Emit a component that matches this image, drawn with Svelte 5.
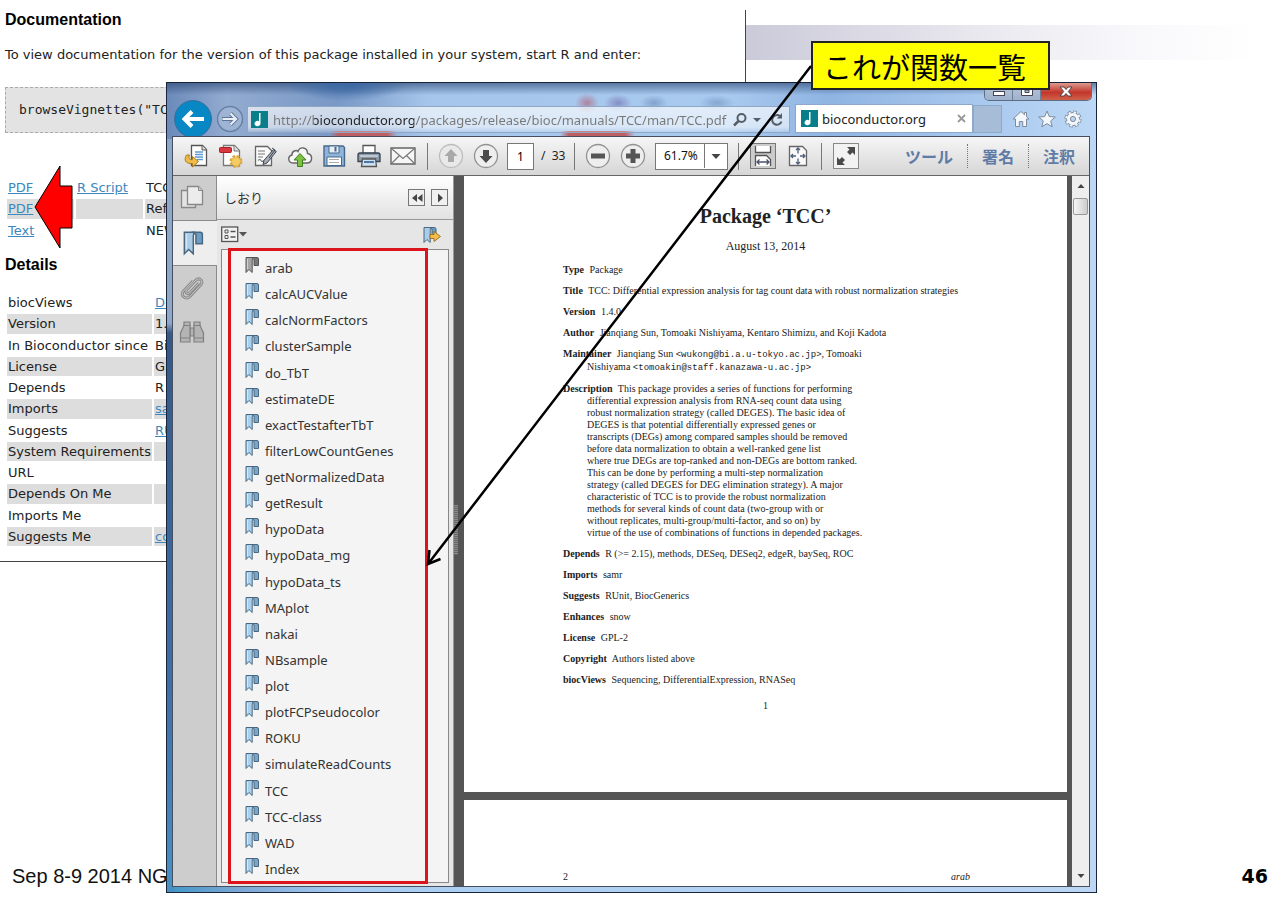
<script>
  const files = [
    { kind: 'PDF', script: 'R Script', text: 'TCC' },
    { kind: 'PDF', script: '', text: 'Refe' },
    { kind: 'Text', script: '', text: 'NEW' }
  ];
  const details = [
    ['biocViews', 'Di', true],
    ['Version', '1.4', false],
    ['In Bioconductor since', 'Bio', false],
    ['License', 'GP', false],
    ['Depends', 'R (', false],
    ['Imports', 'sa', true],
    ['Suggests', 'RU', true],
    ['System Requirements', '', false],
    ['URL', '', false],
    ['Depends On Me', '', false],
    ['Imports Me', '', false],
    ['Suggests Me', 'co', true]
  ];
  const bookmarks = [
    'arab', 'calcAUCValue', 'calcNormFactors', 'clusterSample', 'do_TbT', 'estimateDE',
    'exactTestafterTbT', 'filterLowCountGenes', 'getNormalizedData', 'getResult', 'hypoData',
    'hypoData_mg', 'hypoData_ts', 'MAplot', 'nakai', 'NBsample', 'plot', 'plotFCPseudocolor',
    'ROKU', 'simulateReadCounts', 'TCC', 'TCC-class', 'WAD', 'Index'
  ];
  const description = [
    'differential expression analysis from RNA-seq count data using',
    'robust normalization strategy (called DEGES). The basic idea of',
    'DEGES is that potential differentially expressed genes or',
    'transcripts (DEGs) among compared samples should be removed',
    'before data normalization to obtain a well-ranked gene list',
    'where true DEGs are top-ranked and non-DEGs are bottom ranked.',
    'This can be done by performing a multi-step normalization',
    'strategy (called DEGES for DEG elimination strategy). A major',
    'characteristic of TCC is to provide the robust normalization',
    'methods for several kinds of count data (two-group with or',
    'without replicates, multi-group/multi-factor, and so on) by',
    'virtue of the use of combinations of functions in depended packages.'
  ];
  const fieldsAfter = [
    ['Depends', 'R (>= 2.15), methods, DESeq, DESeq2, edgeR, baySeq, ROC'],
    ['Imports', 'samr'],
    ['Suggests', 'RUnit, BiocGenerics'],
    ['Enhances', 'snow'],
    ['License', 'GPL-2'],
    ['Copyright', 'Authors listed above'],
    ['biocViews', 'Sequencing, DifferentialExpression, RNASeq']
  ];
  let address = $state('http://bioconductor.org/packages/release/bioc/manuals/TCC/man/TCC.pdf');
  let pageNumber = $state('1');
  let zoom = $state('61.7%');
</script>

{#snippet ribbon(size, fill, back, line)}
  <svg width={size} height={size} viewBox="0 0 16 18" aria-hidden="true">
    <path d="M7 1.5h6q1.5 0 1.5 1.5v6.5h-4.5V3z" fill={back} stroke={line} />
    <path d="M2 1.5h7.5q-1.3.6-1.3 2.5v12.500L5 13.500l-3 3z" fill={fill} stroke={line} />
    <path d="M3.500 3v10" stroke="#fff" opacity=".5" />
  </svg>
{/snippet}

{#snippet note()}
  <svg width="17" height="17" viewBox="0 0 17 17" aria-hidden="true">
    <rect width="17" height="17" fill="#087e8b" />
    <path d="M8 2h1.500v10.500a3 2.700 0 1 1-1.500-2.300z" fill="#fff" />
  </svg>
{/snippet}

<main class="slide">
  <div class="band"></div>

  <section class="webpage">
    <h3>Documentation</h3>
    <p>To view documentation for the version of this package installed in your system, start R and enter:</p>
    <pre>browseVignettes("TCC")</pre>
    <table class="files">
      <tbody>
        {#each files as f}
          <tr>
            <td><a href="#file">{f.kind}</a></td>
            <td>{#if f.script}<a href="#script">{f.script}</a>{/if}</td>
            <td>{f.text}</td>
          </tr>
        {/each}
      </tbody>
    </table>
    <h3>Details</h3>
    <table class="details">
      <tbody>
        {#each details as [label, value, linked]}
          <tr>
            <th scope="row">{label}</th>
            <td>{#if linked}<a href="#detail">{value}</a>{:else}{value}{/if}</td>
          </tr>
        {/each}
      </tbody>
    </table>
  </section>

  <svg class="pointer" width="40" height="88" viewBox="0 0 40 88" aria-hidden="true">
    <path d="M1 43L26 2v20h12v42H26v20z" fill="#f00" stroke="#000" />
  </svg>

  <footer>
    <span class="date">Sep 8-9 2014 NGS</span>
    <span class="number">46</span>
  </footer>

  <section class="window">
    <div class="caption">
      <button aria-label="Minimize"><svg width="14" height="12" viewBox="0 0 14 12"><rect x="1.500" y="5.500" width="11" height="4" fill="#fff" stroke="#445" /></svg></button>
      <button aria-label="Maximize"><svg width="14" height="12" viewBox="0 0 14 12"><path d="M1.500.5h11v9h-11zM5 4h4v2.500H5z" fill="#fff" fill-rule="evenodd" stroke="#445" /></svg></button>
      <button class="close" aria-label="Close"><svg width="14" height="12" viewBox="0 0 14 12"><path d="M1 1h4l2 2.500L9 1h4L9.300 5.500 13 10H9L7 7.500 5 10H1l3.700-4.500z" fill="#fff" stroke="#544" /></svg></button>
    </div>

    <nav class="navrow">
      <button class="back" aria-label="Back">
        <svg width="38" height="38" viewBox="0 0 38 38"><circle cx="19" cy="19" r="18.500" fill="#0787c3" stroke="#3b6f9f" /><path d="M30 19H11M18 11.500L10.500 19l7.500 7.500" fill="none" stroke="#fff" stroke-width="4" /></svg>
      </button>
      <button class="forward" aria-label="Forward">
        <svg width="28" height="28" viewBox="0 0 28 28"><circle cx="14" cy="14" r="12.500" fill="#9eb4d4" stroke="#6880a6" stroke-width="1.500" /><path d="M6 14h14M14.500 8.500L20 14l-5.500 5.500" fill="none" stroke="#5e7494" stroke-width="4" /><path d="M6.500 14H20M14.500 8.500L20 14l-5.500 5.500" fill="none" stroke="#e8eef6" stroke-width="2.200" /></svg>
      </button>
      <div class="address">
        {@render note()}
        <input type="text" aria-label="Address" bind:value={address} />
        <button aria-label="Search"><svg width="16" height="16" viewBox="0 0 16 16"><circle cx="9.500" cy="6" r="4" fill="none" stroke="#555d68" stroke-width="2" /><path d="M6.500 9L2 13.500" stroke="#555d68" stroke-width="2.500" /></svg></button>
        <button aria-label="Search options"><svg width="8" height="6" viewBox="0 0 8 6"><path d="M0 1h8L4 5z" fill="#555d68" /></svg></button>
        <button class="reload" aria-label="Refresh"><svg width="14" height="14" viewBox="0 0 14 14"><path d="M11.500 8.500a4.800 4.800 0 1 1-1.500-5.300" fill="none" stroke="#555d68" stroke-width="2" /><path d="M12 0v5.500H6.800z" fill="#555d68" /></svg></button>
      </div>
      <div class="tab">
        {@render note()}
        <span>bioconductor.org</span>
        <button aria-label="Close tab"><svg width="9" height="9" viewBox="0 0 9 9"><path d="M1 1l7 7M8 1L1 8" stroke="#999" stroke-width="1.800" /></svg></button>
      </div>
      <button class="newtab" aria-label="New tab"></button>
      <div class="tools">
        <button aria-label="Home"><svg width="18" height="18" viewBox="0 0 18 18"><path d="M9 1.500L1 9h2.500v7.500h3.800v-5h3.400v5h3.800V9H17l-2.500-2.400V2.500h-2v2.200z" fill="#f4f7fb" stroke="#7f8b9b" /></svg></button>
        <button aria-label="Favorites"><svg width="18" height="18" viewBox="0 0 18 18"><path d="M9 1l2.300 5.600 6 .4-4.600 3.900 1.500 5.900L9 13.600l-5.200 3.200 1.500-5.900L.7 7l6-.4z" fill="#f4f7fb" stroke="#7f8b9b" /></svg></button>
        <button aria-label="Settings"><svg width="18" height="18" viewBox="0 0 18 18"><circle cx="9" cy="9" r="6.800" fill="none" stroke="#7f8b9b" stroke-width="3.600" stroke-dasharray="3.300 2.040" /><circle cx="9" cy="9" r="6.500" fill="#f4f7fb" stroke="#7f8b9b" /><circle cx="9" cy="9" r="6.800" fill="none" stroke="#f4f7fb" stroke-width="2" stroke-dasharray="2.300 3.040" stroke-dashoffset="-.5" /><circle cx="9" cy="9" r="2.600" fill="#bcd5f0" stroke="#7f8b9b" /></svg></button>
      </div>
    </nav>

    <div class="client">
      <div class="toolbar">
        <div class="icons">
          <button aria-label="Open"><svg width="26" height="26" viewBox="0 0 26 26"><path d="M8.500 2.500h11l4 4v16h-15z" fill="#fff" stroke="#555" stroke-width="1.300" /><path d="M19 2.500V7h4.500" fill="#ddd" stroke="#555" /><path d="M12 9h8M12 11.500h8M12 14h8M14 16.500h6" stroke="#5e9bd0" stroke-width="1.600" /><path d="M3.500 12c-3 5-1 9 6 8.500V24l6-5.500-6-5v3.200c-3 .3-4.500-1.200-3-4.700z" fill="#f2bd45" stroke="#a87a20" /></svg></button>
          <button aria-label="Create PDF"><svg width="26" height="26" viewBox="0 0 26 26"><path d="M5.500 2.500h11l5 5v15h-16z" fill="#fff" stroke="#777" stroke-width="1.300" /><path d="M16 2.500V8h5.500" fill="#ddd" stroke="#777" /><rect x="1.500" y="4.500" width="12" height="5" rx="1" fill="#d9363e" stroke="#a51f28" /><circle cx="18" cy="18.500" r="5" fill="none" stroke="#d9a33c" stroke-width="3" stroke-dasharray="2.500 1.427" /><circle cx="18" cy="18.500" r="4.500" fill="#f5cc62" stroke="#e2b04a" /></svg></button>
          <button aria-label="Sign"><svg width="26" height="26" viewBox="0 0 26 26"><path d="M3.500 3.500h12l4 4v15h-16z" fill="#fafafa" stroke="#666" stroke-width="1.300" /><path d="M6 8h7M6 11h7M6 14h5M6 17.500q2-2 3 0t3 0" fill="none" stroke="#777" stroke-width="1.200" /><path d="M21.500 6.500l2.800 2L15 20l-4 1.500 1-4.200z" fill="#a4acb5" stroke="#40464d" /><path d="M20 5l3 2-6 8" fill="none" stroke="#40464d" /></svg></button>
          <button aria-label="Upload"><svg width="26" height="26" viewBox="0 0 26 26"><path d="M6.500 20C1 20 0 13.500 5 12c-.3-4 4.500-5.500 6-3.500C13 3 20.500 4 20.500 10.500 26.500 11.500 25.500 20 20 20z" fill="#f7f7f7" stroke="#666" stroke-width="1.400" /><path d="M13 10.500l6 6.500h-3.500v6.500h-5V17H7z" fill="#7cc142" stroke="#3f7f1d" /></svg></button>
          <button aria-label="Save"><svg width="26" height="26" viewBox="0 0 26 26"><path d="M3 3h19l1.500 1.500v18.500H3z" fill="#8fb4da" stroke="#47688c" stroke-width="1.400" /><path d="M8 3h10v7H8z" fill="#e9eef4" stroke="#47688c" /><path d="M14.500 4v4.500" stroke="#47688c" stroke-width="2" /><path d="M6 14h14.500v8.500H6z" fill="#fff" stroke="#47688c" /><path d="M8 16.500h10M8 19.500h10" stroke="#aaa" /></svg></button>
          <button aria-label="Print"><svg width="26" height="26" viewBox="0 0 26 26"><path d="M7 2.500h12v8H7z" fill="#fff" stroke="#555" stroke-width="1.300" /><path d="M2 12q0-2 2-2h18q2 0 2 2v6.500H2z" fill="#8d9aaa" stroke="#35414f" stroke-width="1.300" /><path d="M4 13h18" stroke="#cfd7e0" stroke-width="1.500" /><path d="M6.500 16h13l1 7.500h-15z" fill="#cfe0f2" stroke="#555" stroke-width="1.300" /><path d="M8 19h10" stroke="#4b78aa" stroke-width="2" /></svg></button>
          <button aria-label="Mail"><svg width="26" height="26" viewBox="0 0 26 26"><path d="M1 5h24v16H1z" fill="#f6f6f6" stroke="#666" stroke-width="1.400" /><path d="M1.500 5.500L13 15.500 24.500 5.500M1.500 20.500l8-8M24.500 20.500l-8-8" fill="none" stroke="#777" stroke-width="1.200" /></svg></button>
        </div>
        <span class="rule"></span>
        <div class="pair">
          <button aria-label="Previous page"><svg width="26" height="26" viewBox="0 0 26 26"><circle cx="13" cy="13" r="11.500" fill="#e9e9e9" stroke="#bdbdbd" stroke-width="1.300" /><path d="M13 6l6.500 7H16v6h-6v-6H6.500z" fill="#a9a9a9" /></svg></button>
          <button aria-label="Next page"><svg width="26" height="26" viewBox="0 0 26 26"><circle cx="13" cy="13" r="11.500" fill="#eee" stroke="#929292" stroke-width="1.300" /><path d="M13 20l6.500-7H16V7h-6v6H6.500z" fill="#4b4b4b" /></svg></button>
        </div>
        <input class="page-no" type="text" aria-label="Page number" bind:value={pageNumber} />
        <span class="total">/&nbsp; 33</span>
        <span class="rule"></span>
        <div class="pair">
          <button aria-label="Zoom out"><svg width="26" height="26" viewBox="0 0 26 26"><circle cx="13" cy="13" r="11.500" fill="#eee" stroke="#929292" stroke-width="1.300" /><path d="M6 10.500h14v5H6z" fill="#555" /></svg></button>
          <button aria-label="Zoom in"><svg width="26" height="26" viewBox="0 0 26 26"><circle cx="13" cy="13" r="11.500" fill="#eee" stroke="#929292" stroke-width="1.300" /><path d="M10.500 6h5v4.500H20v5h-4.500V20h-5v-4.500H6v-5h4.500z" fill="#555" /></svg></button>
        </div>
        <div class="zoom">
          <select aria-label="Zoom level" bind:value={zoom}><option>61.7%</option></select>
          <svg width="23" height="24" viewBox="0 0 23 24" aria-hidden="true"><path d="M.5 0v24" stroke="#777" /><path d="M7.500 10h9L12 15z" fill="#444" /></svg>
        </div>
        <span class="rule"></span>
        <div class="pair view">
          <button class="pressed" aria-label="Fit width"><svg width="26" height="26" viewBox="0 0 26 26"><path d="M5.500 3v6.500h15V3" fill="#fff" stroke="#555" stroke-width="1.300" /><path d="M5.500 23V12.500h11l4 4V23" fill="#fff" stroke="#555" stroke-width="1.300" /><path d="M7 19h12M9.500 16.500L7 19l2.500 2.500M16.500 16.500L19 19l-2.500 2.500" fill="none" stroke="#49536b" stroke-width="1.300" /></svg></button>
          <button aria-label="Fit page"><svg width="26" height="26" viewBox="0 0 26 26"><path d="M4.500 3.500h13l4 4v15h-17z" fill="#fafafa" stroke="#666" stroke-width="1.300" /><path d="M13 5v5.500M13 15.500V21M6 13h5M15 13h5M11 7l2-2 2 2M11 19l2 2 2-2M8 11l-2 2 2 2M18 11l2 2-2 2" fill="none" stroke="#526080" stroke-width="1.300" /></svg></button>
        </div>
        <span class="rule"></span>
        <button class="framed" aria-label="Full screen"><svg width="24" height="24" viewBox="0 0 24 24"><path d="M13 3h8v8l-2.500-2.500L16 11l-3-3 2.500-2.500zM3 21v-8l2.500 2.500L8 13l3 3-2.500 2.500L11 21z" fill="#4a4a4a" /></svg></button>
        <div class="panes">
          <button>ツール</button><button>署名</button><button>注釈</button>
        </div>
      </div>

      <div class="body">
        <div class="strip">
          <button aria-label="Page thumbnails"><svg width="28" height="28" viewBox="0 0 28 28"><path d="M3.500 6.500h14v17h-14z" fill="#e3e3e3" stroke="#888" stroke-width="1.300" /><path d="M9.500 2.500h11l4 4v14h-15z" fill="#ececec" stroke="#888" stroke-width="1.300" /><path d="M20.500 2.500v4h4" fill="#ccc" stroke="#888" /></svg></button>
          <button class="active" aria-label="Bookmarks">{@render ribbon(26, '#a9cde9', '#6c9cc3', '#49677f')}</button>
          <button aria-label="Attachments"><svg width="28" height="28" viewBox="0 0 28 28"><path d="M21 9l-9.500 10c-2 2-5-.5-3-3L18 6c3-3 8 1 5 4.500L12 22.500c-4 4-10.500-1-6.500-5.500L15 7" fill="none" stroke="#8d8d8d" stroke-width="3" /><path d="M21 9l-9.500 10c-2 2-5-.5-3-3L18 6c3-3 8 1 5 4.500L12 22.500c-4 4-10.500-1-6.500-5.500L15 7" fill="none" stroke="#c6c6c6" stroke-width="1" /></svg></button>
          <button aria-label="Find"><svg width="26" height="26" viewBox="0 0 26 26"><g fill="#b4b4b4" stroke="#808080" stroke-width="1.200"><path d="M5 3h6v3.500H5zM15 3h6v3.500h-6zM11 9h4v8h-4z" /><path d="M5 6.500h6L11 23H1.500v-9zM15 6.500h6l3.500 7.500v9H15z" /><path d="M1.500 19H11M15 19h9.500" fill="none" /></g></svg></button>
        </div>

        <aside class="panel">
          <header>
            <h2>しおり</h2>
            <button aria-label="Collapse"><svg width="16" height="16" viewBox="0 0 16 16"><path d="M8 4v8L3 8zM13.500 4v8l-5-4z" fill="#444" /></svg></button>
            <button aria-label="Close panel"><svg width="16" height="16" viewBox="0 0 16 16"><path d="M6 3.500v9L11 8z" fill="#444" /></svg></button>
          </header>
          <div class="options">
            <button aria-label="Options"><svg width="27" height="17" viewBox="0 0 27 17"><rect x=".7" y="1" width="16" height="14.500" fill="#f2f2f2" stroke="#555" stroke-width="1.300" /><path d="M4 4h3v3H4zM4 9.500h3v3H4z" fill="none" stroke="#555" /><path d="M9.500 5.500h5M9.500 11h5" stroke="#555" stroke-width="1.300" /><path d="M18 6h8l-4 4.500z" fill="#555" /></svg></button>
            <button aria-label="New bookmark"><svg width="20" height="18" viewBox="0 0 20 18"><path d="M7 1.500h5q2 0 2 1.500v6.500h-4V3z" fill="#6c9cc3" stroke="#49677f" /><path d="M2 1.500h7.500q-1.300.6-1.300 2.500v12.500L5 13.500l-3 3z" fill="#a9cde9" stroke="#49677f" /><path d="M8 8.500h4V5.500l6.500 5-6.500 5v-3H8z" fill="#f3bd4c" stroke="#a17423" /></svg></button>
          </div>
          <ul>
            {#each bookmarks as name, i}
              <li>
                {#if i === 0}{@render ribbon(18, '#a5a5a5', '#777', '#555')}{:else}{@render ribbon(18, '#a9d0ec', '#7ba6c8', '#49677f')}{/if}
                <a href="#{name}">{name}</a>
              </li>
            {/each}
          </ul>
        </aside>

        <div class="splitter"><span></span></div>

        <div class="viewer">
          <article class="sheet">
            <h1>Package ‘TCC’</h1>
            <p class="when">August 13, 2014</p>
            <div class="fields">
              <p><b>Type</b> Package</p>
              <p><b>Title</b> TCC: Differential expression analysis for tag count data with robust normalization strategies</p>
              <p><b>Version</b> 1.4.0</p>
              <p><b>Author</b> Jianqiang Sun, Tomoaki Nishiyama, Kentaro Shimizu, and Koji Kadota</p>
              <p><b>Maintainer</b> Jianqiang Sun <code>&lt;wukong@bi.a.u-tokyo.ac.jp&gt;</code>, Tomoaki<br />Nishiyama <code>&lt;tomoakin@staff.kanazawa-u.ac.jp&gt;</code></p>
              <p><b>Description</b> This package provides a series of functions for performing{#each description as line}<br />{line}{/each}</p>
              {#each fieldsAfter as [label, value]}
                <p><b>{label}</b> {value}</p>
              {/each}
            </div>
            <p class="folio">1</p>
          </article>
          <article class="sheet next">
            <span>2</span><i>arab</i>
          </article>
        </div>

        <div class="scrollbar">
          <button aria-label="Scroll up"><svg width="16" height="16" viewBox="0 0 16 16"><path d="M4.500 10h7L8 6z" fill="#444" /></svg></button>
          <div class="thumb"></div>
          <button class="down" aria-label="Scroll down"><svg width="16" height="16" viewBox="0 0 16 16"><path d="M4.500 6h7L8 10z" fill="#444" /></svg></button>
        </div>
      </div>
    </div>
  </section>

  <div class="highlight"></div>
  <svg class="arrow" width="400" height="512" viewBox="0 0 400 512" aria-hidden="true">
    <path d="M391 6L8 504M20.500 499L8 504l1.500-14" fill="none" stroke="#000" stroke-width="2.500" />
  </svg>
  <div class="callout">これが関数一覧</div>
</main>

<style>
  :global(body) { margin: 0; background: #fff; }
  .slide { position: relative; min-height: 100vh; overflow: hidden; color: #222; font-family: "DejaVu Sans", sans-serif; font-size: 13px; }
  .slide :where(h1, h2, h3, p, pre, ul) { margin: 0; padding: 0; }
  button { display: flex; align-items: center; justify-content: center; padding: 0; border: 0; background: none; font: inherit; color: inherit; }
  svg { display: block; flex: none; }
  input { min-width: 0; box-sizing: border-box; }

  .band { position: absolute; left: 746px; right: 20px; top: 25px; height: 35px; background: linear-gradient(90deg, #cbcad9, #e9e8ef 45%, #f8f8fb 75%, #fff); }

  .webpage { position: absolute; left: 0; top: 10px; width: 745px; height: 551px; border: solid #444; border-width: 0 1px 1px 0; }
  .webpage h3 { padding-left: 5px; font: bold 16px/20px "Liberation Sans", sans-serif; color: #000; }
  .webpage > p { padding: 16px 0 0 5px; line-height: 18px; white-space: nowrap; }
  .webpage pre { margin: 23px 5px 0; padding: 14px 13px; border: 1px dashed #aaa; background: #e3e3e3; font: 13px/16px "DejaVu Sans Mono", monospace; }
  .webpage a { color: #3d87bd; }
  .webpage table { border-spacing: 2px; }
  .webpage td, .webpage th { padding: 0 1px; line-height: 19px; font-weight: normal; text-align: left; white-space: nowrap; }
  .webpage tr:nth-child(even) > * { background: #ddd; }
  .files { margin: 43px 0 13px 5px; width: 400px; height: 66px; }
  .files td:first-child, .files td:nth-child(2) { width: 65px; }
  .details { margin: 16px 0 0 5px; width: 400px; height: 257px; }
  .details th { width: 142px; }

  .pointer { position: absolute; left: 34px; top: 164px; }

  footer { position: absolute; left: 12px; right: 12px; bottom: 15px; display: flex; justify-content: space-between; font: 20px/26px "Liberation Sans", sans-serif; color: #111; }
  .number { font-family: "DejaVu Sans", sans-serif; font-size: 19px; font-weight: bold; color: #000; }

  .window {
    position: absolute; left: 166px; top: 82px; width: 931px; height: 811px; box-sizing: border-box;
    padding: 0 6px 5px 5px; border: 1px solid #17243a; display: flex; flex-direction: column;
    background:
      linear-gradient(90deg, transparent 163px, #bd5f63 172px 220px, transparent 230px) 0 48px / 100% 5px no-repeat,
      linear-gradient(90deg, transparent 393px, #bd5f63 402px 458px, transparent 468px) 0 48px / 100% 5px no-repeat,
      radial-gradient(ellipse 12px 10px at 420px 20px, #b0637aaa, transparent),
      radial-gradient(ellipse 14px 9px at 451px 20px, #6d66a899, transparent),
      radial-gradient(ellipse 14px 8px at 487px 20px, #5c7fae88, transparent),
      radial-gradient(ellipse 18px 8px at 550px 20px, #5c7fae77, transparent),
      radial-gradient(ellipse 60px 16px at 180px 2px, #3c69a5, transparent),
      linear-gradient(180deg, #26436f99, transparent 12px),
      linear-gradient(90deg, #6b8ab9 0, #92abd0 60px, #7898c6 170px, #a5c5ea 260px, #a9caef 560px, #8fb4e2 660px, #bcd8f6 100%) 0 0 / 100% 56px no-repeat,
      linear-gradient(180deg, #90a8c8 240px, #345988 250px, #3f6ea6 600px, #4792c4 100%) 0 0 / 8px 100% no-repeat,
      linear-gradient(90deg, #3f97c8, #7ba7d4 70px, #a9cdf2 180px, #bcd6f4);
  }
  .caption { align-self: flex-end; display: flex; height: 18px; margin-right: -2px; border: 1px solid #5d6d85; border-top: 0; border-radius: 0 0 5px 5px; overflow: hidden; box-sizing: border-box; }
  .caption button { width: 28px; background: linear-gradient(#b9c6da, #9fb2cc); border-right: 1px solid #6d7f99; }
  .caption .close { width: 50px; border: 0; background: linear-gradient(#dd9a8f, #c2362b 55%, #cf6149); }

  .navrow { display: flex; height: 35px; align-items: center; font: 14px/20px "Noto Sans", sans-serif; }
  .back { width: 38px; height: 35px; align-items: flex-start; overflow: visible; margin-left: 2px; }
  .back svg { margin-top: -1px; }
  .forward { margin-left: 4px; }
  .address { flex: 1; min-width: 0; height: 27px; margin: 2px 0 0 3px; box-sizing: border-box; display: flex; align-items: center; gap: 5px; padding: 0 5px 0 3px; border: 1px solid #8fa6c4; background: linear-gradient(#ffffffa8, #ffffff90 80%, #ffffff30); }
  .address input { flex: 1; border: 0; padding: 0; font: 13px/20px "Noto Sans", sans-serif; color: transparent; background: linear-gradient(90deg, #777 0 41px, #222 41px 141px, #777 141px); background-clip: text; -webkit-background-clip: text; }
  .reload { margin-left: 4px; }
  .tab { width: 178px; height: 29px; margin: 0 0 0 5px; box-sizing: border-box; display: flex; align-items: center; gap: 4px; padding: 0 6px 0 5px; border: 1px solid #8ca9cb; background: #fff; font-size: 13px; }
  .tab span { flex: 1; }
  .newtab { width: 29px; height: 28px; box-sizing: border-box; border: 1px solid #8fa9c9; background: #a7bdd7; }
  .tools { display: flex; gap: 8px; padding: 0 8px 0 10px; }

  .client { flex: 1; min-height: 0; display: flex; flex-direction: column; border: 1px solid #454f5e; }
  .toolbar { height: 39px; box-sizing: border-box; display: flex; align-items: center; border-bottom: 1px solid #666; background: linear-gradient(#f6f6f6, #d6d6d6); padding-left: 9px; font: 12px/20px "Noto Sans", sans-serif; }
  .icons { display: flex; justify-content: space-between; width: 235px; }
  .icons button { width: 28px; }
  .rule { width: 1px; height: 27px; background: #777; margin: 0 10px; }
  .pair { display: flex; gap: 9px; }
  .page-no { width: 27px; height: 27px; margin: 0 7px 0 8px; border: 1px solid #777; background: #fff; text-align: center; font: inherit; padding: 0; }
  .total { width: 24px; white-space: nowrap; }
  .total + .rule { margin: 0 10px 0 9px; }
  .zoom { display: flex; align-items: center; margin-left: 9px; width: 73px; height: 27px; box-sizing: border-box; border: 1px solid #777; background: #fff; }
  .zoom select { flex: 1; width: 48px; height: 25px; appearance: none; border: 0; background: none; padding: 0 0 0 8px; font: inherit; color: #111; margin-right: -23px; }
  .zoom svg { pointer-events: none; }
  .zoom + .rule { margin-right: 11px; }
  .pressed { box-shadow: 0 0 0 1px #777 inset; background: #ccc; }
  .framed { width: 26px; height: 26px; border: 1px solid #888; box-sizing: border-box; background: #f2f2f2; margin-left: 1px; }
  .panes { flex: 1; display: flex; justify-content: flex-end; font: bold 16px/24px "Noto Sans CJK JP", sans-serif; color: #5f7ca6; }
  .panes button { padding: 0 14px; white-space: nowrap; }
  .panes button + button { border-left: 1px dotted #777; }

  .body { flex: 1; min-height: 0; display: flex; }
  .strip { width: 43px; display: flex; flex-direction: column; background: #cdcdcd; border-right: 1px solid #8a8a8a; }
  .strip button { height: 44px; padding-right: 5px; }
  .strip .active { margin-right: -1px; border: solid #8a8a8a; border-width: 1px 0; background: #eee; box-sizing: border-box; height: 46px; }
  .panel { width: 236px; display: flex; flex-direction: column; background: #e6e6e6; }
  .panel header { height: 44px; box-sizing: border-box; display: flex; align-items: center; gap: 6px; padding: 0 5px 0 7px; border-bottom: 1px solid #999; background: linear-gradient(#fff, #e2e2e2); }
  .panel h2 { flex: 1; font: 13px/20px "Noto Sans CJK JP", sans-serif; color: #333; }
  .panel header button { border: 1px solid #777; width: 17px; height: 17px; background: #f0f0f0; }
  .options { display: flex; justify-content: space-between; align-items: center; height: 29px; padding: 0 11px 0 4px; }
  .panel ul { flex: 1; display: flex; flex-direction: column; justify-content: space-between; margin: 0 4px 3px; padding: 2px 0 3px 21px; border: 1px solid #888; background: #f4f4f4; list-style: none; }
  .panel li { display: flex; gap: 4px; height: 26px; }
  .panel li a { padding-top: 6px; font: 13px/20px "Noto Sans", sans-serif; color: #333; text-decoration: none; }
  .panel li svg { margin-top: 4px; }

  .splitter { width: 11px; display: flex; align-items: center; background: #555; border-left: 1px solid #999; box-sizing: border-box; }
  .splitter span { width: 4px; height: 50px; margin-bottom: 3px; background: repeating-linear-gradient(#8a8a8a 0 1px, #666 1px 2px); }
  .viewer { flex: 1; min-width: 0; display: flex; flex-direction: column; gap: 8px; background: #555; font: 10px/12px "Liberation Serif", serif; color: #222; }
  .sheet { flex: 1; background: #fff; }
  .sheet h1 { padding-top: 27px; font-size: 20px; line-height: 26px; text-align: center; }
  .when { padding: 9px 0 10px; font-size: 12px; line-height: 16px; text-align: center; }
  .fields { display: flex; flex-direction: column; gap: 9px; margin-left: 99px; white-space: nowrap; }
  .fields p { padding-left: 24px; text-indent: -24px; }
  .fields b { margin-right: 3px; }
  .fields code { font: 9px/12px "Liberation Mono", monospace; }
  .folio { padding-top: 14px; text-align: center; }
  .sheet.next { flex: none; height: 86px; box-sizing: border-box; padding: 0 97px 3px 99px; display: flex; justify-content: space-between; align-items: flex-end; }

  .scrollbar { width: 17px; display: flex; flex-direction: column; background: #eee; border-left: 5px solid #555; }
  .scrollbar button { height: 20px; }
  .thumb { height: 17px; margin: 2px 1px; border: 1px solid #999; border-radius: 2px; background: linear-gradient(90deg, #f6f6f6, #ccc); box-sizing: border-box; }
  .down { margin-top: auto; }

  .highlight { position: absolute; left: 228px; top: 248px; width: 200px; height: 636px; box-sizing: border-box; border: 3px solid #dc141c; }
  .arrow { position: absolute; left: 420px; top: 60px; }
  .callout { position: absolute; left: 811px; top: 41px; width: 239px; height: 49px; box-sizing: border-box; padding: 0 0 0 10px; border: 2px solid #222; background: #ff0; color: #000; font: 29px/47px "Noto Sans CJK JP", sans-serif; white-space: nowrap; }
</style>
